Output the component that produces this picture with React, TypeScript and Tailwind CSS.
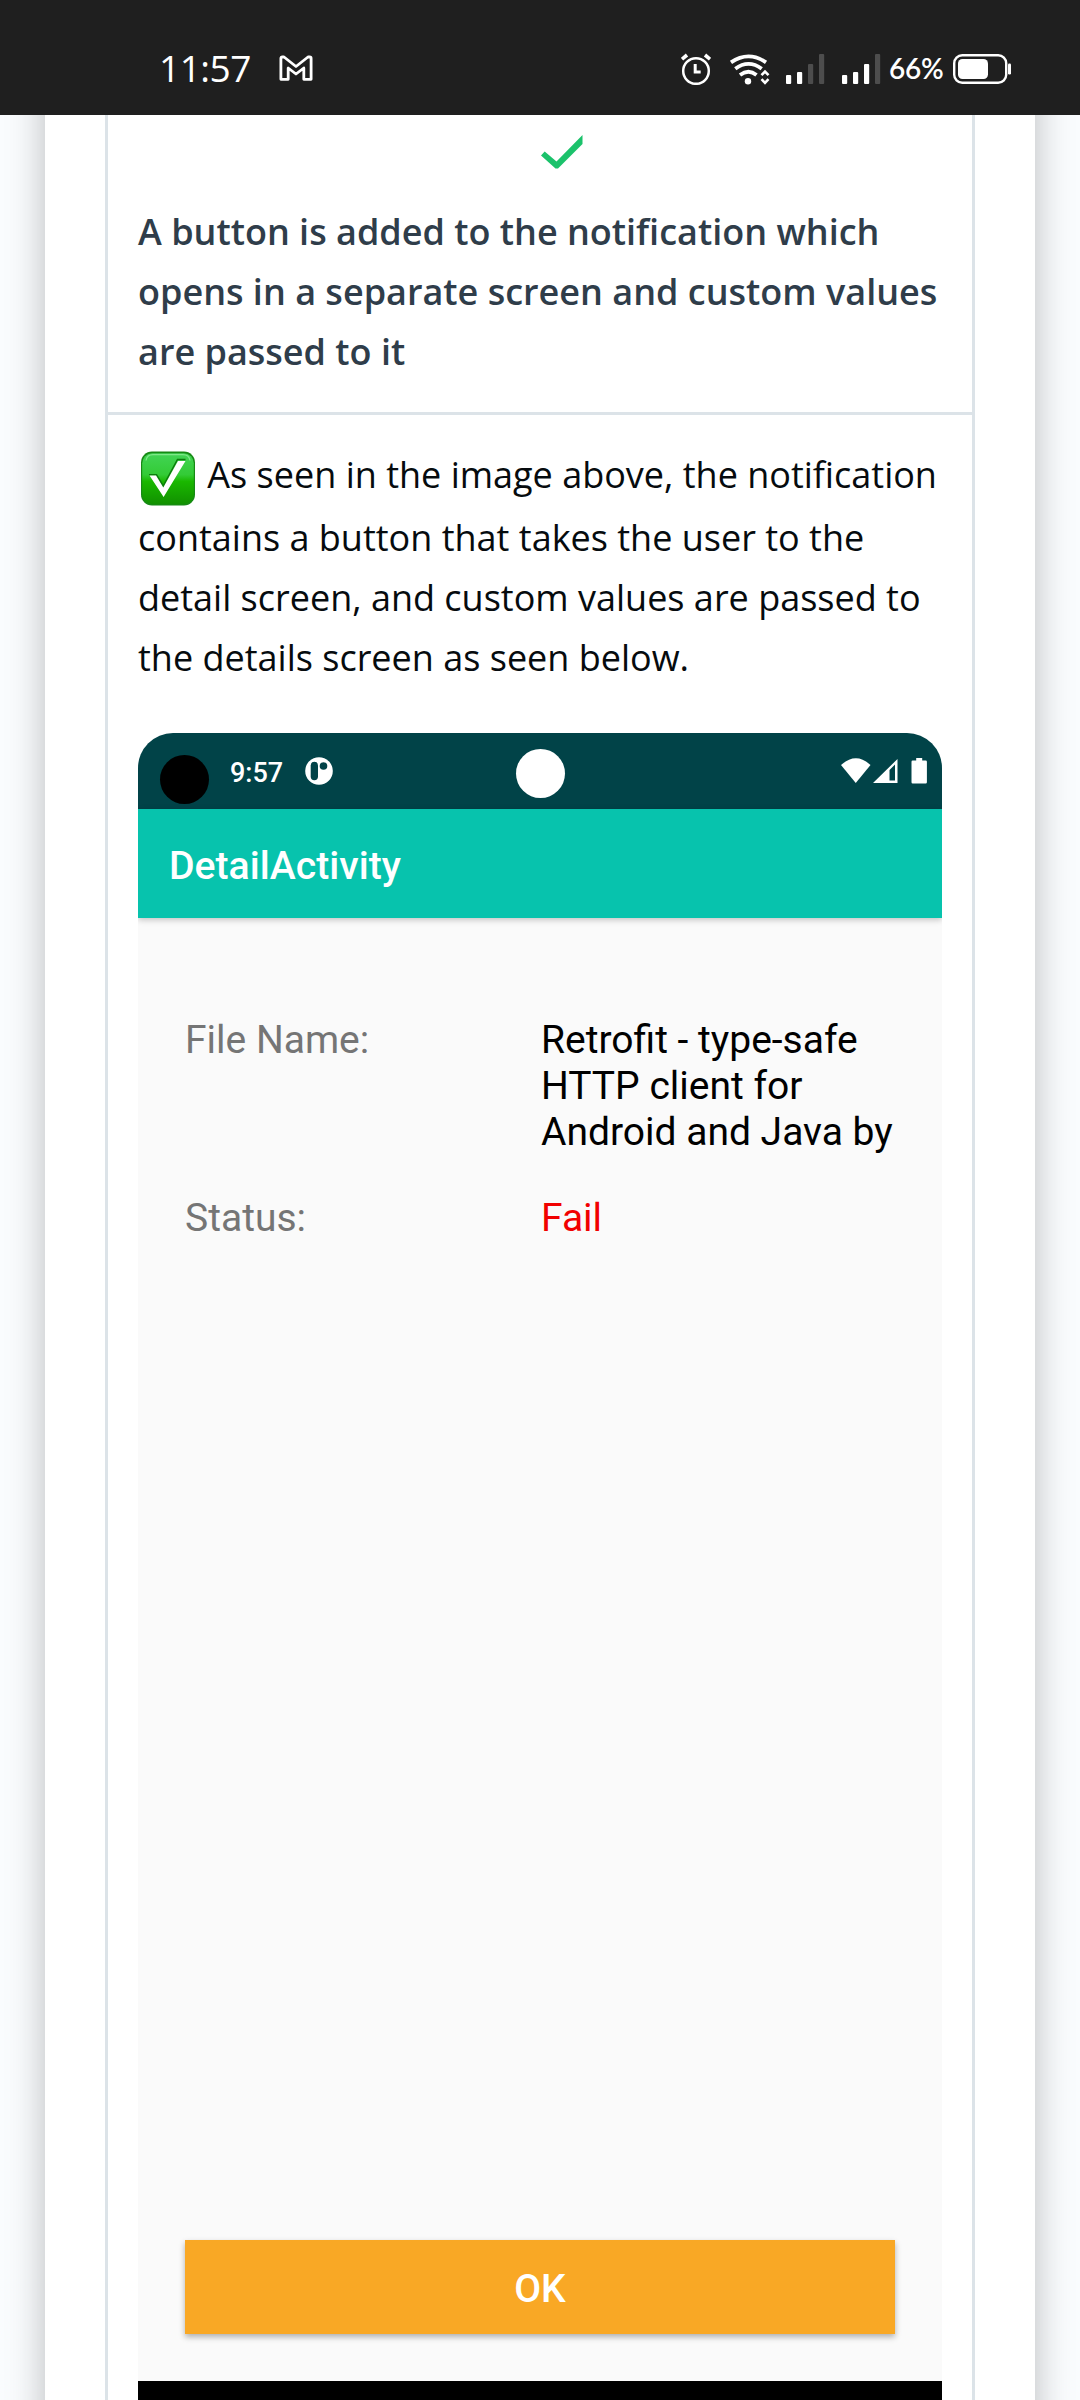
const openSans = "font-['Open_Sans','Noto_Sans',sans-serif]";

function GmailIcon() {
  return (
    <svg width="34" height="28" viewBox="0 0 34 28" fill="none" stroke="#fff" strokeWidth="2.8" strokeLinejoin="round">
      <path d="M1.9 3.4Q1.9 2 3.3 2H5L17 11.5L29 2h1.7Q32.1 2 32.1 3.4V24.3H24.8V13L17 19L9.2 13V24.3H1.9Z" />
    </svg>
  );
}

function AlarmIcon() {
  return (
    <svg width="30" height="32" viewBox="0 0 30 32" fill="none" stroke="#fff">
      <circle cx="15" cy="18" r="12.8" strokeWidth="2.5" />
      <path d="M14.2 11v8h5.5" strokeWidth="3" />
      <path d="M1 6.2L6 2M29 6.2L24 2" strokeWidth="3.6" />
    </svg>
  );
}

function WifiIcon() {
  return (
    <svg width="42" height="32" viewBox="0 0 42 32" fill="none" stroke="#fff" strokeWidth="3.8">
      <path d="M2 8.4Q19.500 -3.600 37 8.4" />
      <path d="M6.300 14.800Q19.500 5 32.700 14.800" />
      <path d="M11 21Q19.500 14.600 27.500 21" />
      <circle cx="19" cy="27.200" r="3.200" fill="#fff" stroke="none" />
      <path d="M32.500 21.200L36 17.600L39.500 21.200M32.500 25.200L36 28.800L39.500 25.200" strokeWidth="2.6" />
    </svg>
  );
}

function SignalIcon({ strong }: { strong?: boolean }) {
  return (
    <svg width="39" height="30" viewBox="0 0 39 30" fill="#fff">
      <rect x="0" y="21" width="5.200" height="9" rx="1" />
      <rect x="11" y="18" width="5.200" height="12" rx="1" />
      <rect x="22" y="10" width="5.200" height="20" rx="1" fill={strong ? "#fff" : "#4d4d4d"} />
      <rect x="33" y="0" width="5.200" height="30" rx="1" fill="#4d4d4d" />
    </svg>
  );
}

function BatteryIcon() {
  return (
    <svg width="59" height="30" viewBox="0 0 59 30" fill="none">
      <rect x="1.200" y="1.200" width="52" height="27.600" rx="8" stroke="#fff" strokeWidth="2.4" />
      <rect x="5" y="5" width="30" height="20" rx="4.500" fill="#fff" />
      <rect x="55" y="9.500" width="3" height="11" rx="1.300" fill="#fff" />
    </svg>
  );
}

function PhoneStatusBar() {
  return (
    <header className="flex h-[115px] shrink-0 items-start bg-[#1f1f1f] text-white">
      <div className="mt-[45px] ml-[159px] w-[121px] font-['Open_Sans',sans-serif] text-[37px] leading-[46px] font-normal tracking-[-0.5px]">
        11:57
      </div>
      <div className="mt-[55px] -ml-[1px]">
        <GmailIcon />
      </div>
      <div className="mt-[53px] ml-[368px]">
        <AlarmIcon />
      </div>
      <div className="mt-[54px] ml-[18px]">
        <WifiIcon />
      </div>
      <div className="mt-[54px] ml-[15px]">
        <SignalIcon />
      </div>
      <div className="mt-[54px] ml-[17px]">
        <SignalIcon strong />
      </div>
      <div className="mt-[50px] ml-[8px] w-[64px] font-['Lato',sans-serif] text-[28px] leading-[36px] font-semibold tracking-[-0.2px]">
        66%
      </div>
      <div className="mt-[54px]">
        <BatteryIcon />
      </div>
    </header>
  );
}

function CheckEmoji() {
  return (
    <svg className="mr-[2px] ml-[2px] inline-block h-[56px] w-[56px] align-[-19px]" viewBox="0 0 56 56">
      <defs>
        <linearGradient id="face" x1="0" y1="0" x2="0" y2="1">
          <stop offset="0" stopColor="#42d455" />
          <stop offset="0.420" stopColor="#33cb36" />
          <stop offset="0.550" stopColor="#1ab800" />
          <stop offset="1" stopColor="#119000" />
        </linearGradient>
      </defs>
      <rect x="1" y="0.500" width="54" height="54" rx="11" fill="#168a14" />
      <rect x="2.200" y="2.300" width="51.600" height="51" rx="10" fill="url(#face)" />
      <path d="M6 9.500Q7 3.700 13 3.700H43Q49 3.700 50 9.500" fill="none" stroke="#7fe889" strokeWidth="1.200" />
      <path d="M9 23.700H16.500L23.200 35L37.500 8.500H45.500" fill="none" stroke="#0b7d0c" strokeWidth="1.500" />
      <path d="M9.500 24.500H16L23.300 36.500L38 10H45.500L23.600 46Z" fill="#fff" />
    </svg>
  );
}

function EmulatorStatusBar() {
  return (
    <div className="flex h-[76px] items-start bg-[#014348] text-white">
      <div className="mt-[22px] ml-[22px] h-[49px] w-[49px] rounded-full bg-black" />
      <div className="mt-[23px] ml-[21px] w-[75px] text-[27px] leading-[34px] font-medium">9:57</div>
      <svg className="mt-[24px]" width="28" height="28" viewBox="0 0 28 28">
        <circle cx="14" cy="14" r="13.800" fill="#fff" />
        <rect x="5.700" y="4.800" width="7.300" height="18.400" rx="3.650" fill="#014348" />
        <circle cx="18.500" cy="9" r="3.800" fill="#014348" />
      </svg>
      <div className="mt-[16px] ml-[183px] h-[49px] w-[49px] rounded-full bg-white" />
      <svg className="mt-[25px] ml-[276px]" width="87" height="26" viewBox="0 0 87 26" fill="#fff">
        <path d="M0 7Q15 -6.500 29.500 7L14.750 25Z" />
        <path fillRule="evenodd" d="M32 25L56.500 1V25ZM48.500 12V22.500H54V6.500Z" />
        <path d="M75.200 0h6v2.500h3.500q1.200 0 1.200 1.200v20.600q0 1.200-1.200 1.200h-13q-1.200 0-1.200-1.200v-20.600q0-1.200 1.200-1.200h3.500z" />
      </svg>
    </div>
  );
}

function EmulatorScreen() {
  return (
    <div className="w-[804px] overflow-hidden rounded-t-[35px] bg-[#fafafa] font-['Roboto',sans-serif]">
      <EmulatorStatusBar />
      <div className="relative flex h-[109px] items-center bg-[#07c3ad] pl-[31px] text-[39.2px] leading-[46px] font-medium text-white shadow-[0_2px_6px_rgba(0,0,0,0.22)]">
        <span className="mt-[5px]">DetailActivity</span>
      </div>
      <div className="grid h-[1322px] grid-cols-[356px_1fr] content-start gap-y-[40px] pt-[99px] pl-[47px] text-[39px] leading-[46px]">
        <div className="text-[#757575]">File Name:</div>
        <div className="text-black">
          Retrofit - type-safe
          <br />
          HTTP client for
          <br />
          Android and Java by
        </div>
        <div className="text-[#757575]">Status:</div>
        <div className="text-[#f10000]">Fail</div>
      </div>
      <div className="h-[141px] px-[47px]">
        <button className="block h-[94px] w-full bg-[#f9a825] text-[39px] leading-[98px] font-medium text-white shadow-[0_3px_6px_rgba(0,0,0,0.3)]">
          OK
        </button>
      </div>
      <div className="h-[60px] bg-black" />
    </div>
  );
}

export default function App() {
  return (
    <div className="flex h-[2400px] w-[1080px] flex-col overflow-hidden bg-[#fafcfe]">
      <PhoneStatusBar />
      <main className="min-h-0 flex-1 overflow-hidden">
        <div className="-mt-[100px] mr-[45px] ml-[45px] h-[2500px] bg-white px-[60px] pt-[100px] shadow-[0_0_36px_rgba(0,0,0,0.26)]">
          <div className="h-full w-[870px] border-x-[3px] border-[#dce3e8]">
            <section className={`h-[300px] border-b-[3px] border-[#dce3e8] px-[30px] pt-[20px] ${openSans}`}>
              <svg className="ml-[403px]" width="42" height="38" viewBox="0 0 42 38">
                <path d="M0 20.500L3.700 16.500L15.500 26.500L41.500 0V9L17 33.500H14.500Z" fill="#1bc26b" />
              </svg>
              <p className="mt-[29px] text-[36px] leading-[60px] font-semibold whitespace-nowrap text-[#2f3d4a]">
                A button is added to the notification which
                <br />
                opens in a separate screen and custom values
                <br />
                are passed to it
              </p>
            </section>
            <section className="px-[30px] pt-[30px]">
              <div className={`h-[288px] text-[36px] leading-[60px] whitespace-nowrap text-[#060b0e] ${openSans}`}>
                <p className="h-[63px]">
                  <CheckEmoji /> As seen in the image above, the notification
                </p>
                <p>
                  contains a button that takes the user to the
                  <br />
                  detail screen, and custom values are passed to
                  <br />
                  the details screen as seen below.
                </p>
              </div>
              <EmulatorScreen />
            </section>
          </div>
        </div>
      </main>
    </div>
  );
}
